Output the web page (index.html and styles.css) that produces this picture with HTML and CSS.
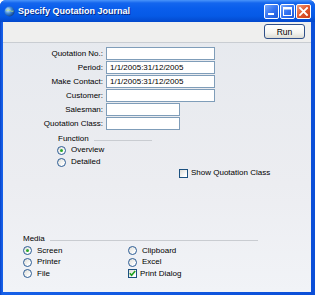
FILE: index.html
```html
<!DOCTYPE html>
<html>
<head>
<meta charset="utf-8">
<link rel="stylesheet" href="styles.css">
</head>
<body>
<div class="window">
  <div class="titlebar">
    <svg class="app-icon" width="11" height="11" viewBox="0 0 11 11">
      <defs>
        <radialGradient id="g" cx="35%" cy="35%" r="70%">
          <stop offset="0" stop-color="#d8ecff"/>
          <stop offset="0.5" stop-color="#3f8ad8"/>
          <stop offset="1" stop-color="#123f86"/>
        </radialGradient>
      </defs>
      <circle cx="5.5" cy="5.5" r="5" fill="url(#g)"/>
      <path d="M2 4.5 Q4 3 6 4.5 T9.5 5" stroke="#9fd08a" stroke-width="1" fill="none"/>
    </svg>
    <span class="title">Specify Quotation Journal</span>
    <div class="tb-buttons">
      <div class="tb-btn"><svg width="15" height="15" viewBox="0 0 15 15"><rect x="4" y="9" width="6" height="2" fill="#fff"/></svg></div>
      <div class="tb-btn"><svg width="15" height="15" viewBox="0 0 15 15"><rect x="3.5" y="3.5" width="8" height="8" fill="none" stroke="#fff" stroke-width="1"/><rect x="3.5" y="3.5" width="8" height="2" fill="#fff"/></svg></div>
      <div class="tb-btn close"><svg width="15" height="15" viewBox="0 0 15 15"><path d="M4 4 L11 11 M11 4 L4 11" stroke="#fff" stroke-width="1.8" stroke-linecap="square"/></svg></div>
    </div>
  </div>
  <div class="frame">
    <div class="toolbar">
      <button class="run">Run</button>
    </div>
    <div class="content">
      <div class="form">
        <label>Quotation No.:</label><div class="input wide"></div>
        <label>Period:</label><div class="input wide">1/1/2005:31/12/2005</div>
        <label>Make Contact:</label><div class="input wide">1/1/2005:31/12/2005</div>
        <label>Customer:</label><div class="input wide"></div>
        <label>Salesman:</label><div class="input short"></div>
        <label>Quotation Class:</label><div class="input short"></div>
      </div>
      <div class="group function">
        <div class="group-head"><span>Function</span><div class="rule"></div></div>
        <div class="opt"><span class="radio on"></span>Overview</div>
        <div class="opt"><span class="radio"></span>Detailed</div>
      </div>
      <div class="opt show-class"><span class="check"></span>Show Quotation Class</div>
      <div class="group media">
        <div class="group-head"><span>Media</span><div class="rule"></div></div>
        <div class="media-grid">
          <div class="opt"><span class="radio on"></span>Screen</div>
          <div class="opt"><span class="radio"></span>Clipboard</div>
          <div class="opt"><span class="radio"></span>Printer</div>
          <div class="opt"><span class="radio"></span>Excel</div>
          <div class="opt"><span class="radio"></span>File</div>
          <div class="opt"><span class="check on"><svg width="9" height="9" viewBox="0 0 9 9"><path d="M1.8 4.2 L3.6 6.2 L7.2 2" stroke="#21a121" stroke-width="1.6" fill="none"/></svg></span>Print Dialog</div>
        </div>
      </div>
    </div>
  </div>
</div>
</body>
</html>
```

FILE: styles.css
```css
html, body {
  margin: 0;
  padding: 0;
}
body {
  width: 315px;
  height: 295px;
  overflow: hidden;
  font-family: "Liberation Sans", Arial, sans-serif;
  font-size: 8px;
  color: #000;
}
.window {
  width: 315px;
  height: 295px;
  box-sizing: border-box;
  background: linear-gradient(to right, #0842c8 0, #1660e8 2px, #0b4fd8 100%);
  padding: 0 4px 3px 3px;
  display: flex;
  flex-direction: column;
  border-radius: 6px 6px 0 0;
}
.titlebar {
  height: 22px;
  flex: none;
  margin: 0 -4px 0 -3px;
  padding: 0 4px 0 4px;
  display: flex;
  align-items: center;
  background: linear-gradient(to bottom, #4a94fa 0, #1466ee 3px, #0a5eec 8px, #065ae6 16px, #0348cc 22px);
  border-radius: 6px 6px 0 0;
}
.app-icon {
  flex: none;
  margin-top: 1px;
}
.title {
  margin-left: 3px;
  color: #fff;
  font-weight: bold;
  font-size: 9px;
  text-shadow: 1px 1px 0 #0a2a80;
  flex: 1;
}
.tb-buttons {
  display: flex;
  gap: 1px;
}
.tb-btn {
  width: 15px;
  height: 15px;
  box-sizing: border-box;
  border: 1px solid #fff;
  border-radius: 2px;
  background: linear-gradient(135deg, #7aa8fa 0, #3474f2 50%, #1c58d8 100%);
  display: flex;
  align-items: center;
  justify-content: center;
  overflow: hidden;
}
.tb-btn svg {
  flex: none;
}
.tb-btn.close {
  background: linear-gradient(135deg, #f0a080 0, #e0582e 50%, #c83a18 100%);
}
.frame {
  flex: 1;
  display: flex;
  flex-direction: column;
  background: linear-gradient(to bottom, #e6e9ee 0, #ecedf1 60%, #f1f3f7 100%);
}
.toolbar {
  height: 20px;
  flex: none;
  background: #efefee;
  border-bottom: 1px solid #c9cdd2;
  display: flex;
  justify-content: flex-end;
  align-items: flex-start;
  padding-right: 6px;
}
.run {
  margin-top: 2px;
  width: 41px;
  height: 15px;
  padding: 0;
  font-family: inherit;
  font-size: 8.5px;
  color: #000;
  border: 1px solid #2f4f88;
  border-radius: 3px;
  background: linear-gradient(to bottom, #ffffff 0, #f4f4f0 60%, #dcdcd4 100%);
}
.content {
  flex: 1;
  padding-top: 4px;
}
.form {
  display: grid;
  grid-template-columns: 100px auto;
  column-gap: 3px;
  row-gap: 1px;
  align-items: center;
}
.form label {
  text-align: right;
  line-height: 13px;
}
.input {
  height: 13px;
  box-sizing: border-box;
  border: 1px solid #7f9db9;
  background: #fff;
  line-height: 11px;
  padding-left: 3px;
}
.input.wide { width: 109px; }
.input.short { width: 74px; }
.group-head {
  display: flex;
  align-items: center;
  height: 10px;
  line-height: 10px;
}
.group-head .rule {
  height: 1px;
  background: #c9ccd1;
  margin-left: 5px;
  margin-top: 2px;
}
.function {
  margin-top: 4px;
  margin-left: 55px;
}
.function .rule {
  width: 58px;
}
.opt {
  display: flex;
  align-items: center;
  height: 12px;
  line-height: 12px;
  white-space: nowrap;
}
.function .opt {
  margin-left: -1px;
}
.radio, .check {
  width: 9px;
  height: 9px;
  box-sizing: border-box;
  border: 1px solid #2a5a8c;
  background: linear-gradient(135deg, #dcdcd6 0, #fff 80%);
  margin-right: 5px;
  flex: none;
  position: relative;
}
.radio {
  border-radius: 50%;
  border-color: #2c5c94;
}
.radio.on::after {
  content: "";
  position: absolute;
  left: 2px;
  top: 2px;
  width: 3px;
  height: 3px;
  border-radius: 50%;
  background: #2aa82a;
}
.check {
  margin-right: 3px;
  border-color: #1c5180;
}
.check svg {
  position: absolute;
  left: -1px;
  top: -1px;
}
.show-class {
  margin-left: 176px;
  height: 10px;
}
.media {
  margin-top: 56px;
  margin-left: 20px;
}
.media .rule {
  width: 208px;
}
.media-grid {
  display: grid;
  grid-template-columns: 105px auto;
  grid-auto-rows: 11.5px;
  margin-top: 1px;
}
.media-grid .opt {
  height: 11.5px;
}
```
